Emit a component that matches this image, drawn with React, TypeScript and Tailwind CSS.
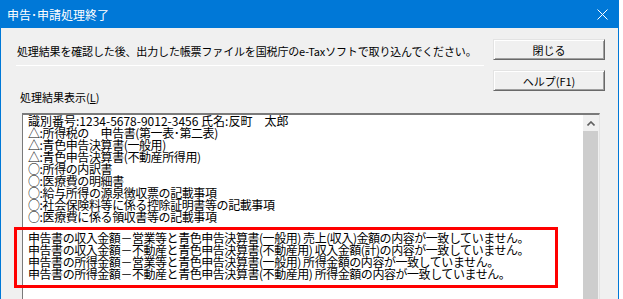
import React from "react";

const font = { fontFamily: '"Noto Sans CJK JP", "Noto Sans", sans-serif' };

const listLines = [
  "識別番号:1234-5678-9012-3456 氏名:反町　太郎",
  "△:所得税の　申告書(第一表･第二表)",
  "△:青色申告決算書(一般用)",
  "△:青色申告決算書(不動産所得用)",
  "○:所得の内訳書",
  "○:医療費の明細書",
  "○:給与所得の源泉徴収票の記載事項",
  "○:社会保険料等に係る控除証明書等の記載事項",
  "○:医療費に係る領収書等の記載事項",
];

const errorLines = [
  "申告書の収入金額－営業等と青色申告決算書(一般用) 売上(収入)金額の内容が一致していません。",
  "申告書の収入金額－不動産と青色申告決算書(不動産用) 収入金額(計)の内容が一致していません。",
  "申告書の所得金額－営業等と青色申告決算書(一般用) 所得金額の内容が一致していません。",
  "申告書の所得金額－不動産と青色申告決算書(不動産用) 所得金額の内容が一致していません。",
];

const WinButton = ({ label }: { label: string }) => (
  <button className="w-[112px] h-[21px] bg-[#f0f0f0] border border-t-[#e3e3e3] border-l-[#e3e3e3] border-r-[#696969] border-b-[#696969] shadow-[inset_1px_1px_0_#ffffff,inset_-1px_-1px_0_#a0a0a0] text-[11px] leading-[12px] text-black flex items-center justify-center">
    {label}
  </button>
);

const App = () => {
  return (
    <div className="relative w-[623px] h-[299px] bg-white overflow-hidden text-black" style={font}>
      <div className="w-[619px] h-full flex flex-col border-x border-t border-[#0078d7]">
        {/* title bar */}
        <div className="h-[27px] bg-[#0078d7] text-white text-[12px] flex items-center justify-between pl-[6px] pr-[10px] shrink-0">
          <span className="leading-[12px]">申告･申請処理終了</span>
          <svg width="11" height="11" viewBox="0 0 11 11">
            <path d="M0.5 0.5 L10.5 10.5 M10.5 0.5 L0.5 10.5" stroke="#ffffff" strokeWidth="1" />
          </svg>
        </div>

        {/* body */}
        <div className="flex-1 bg-[#f0f0f0] pt-[11px] flex flex-col min-h-0">
          <div className="flex h-[52px] shrink-0">
            <div className="w-[467px] ml-[16px] pt-[6px]">
              <p className="text-[11px] leading-[12px] tracking-[-0.15px] whitespace-nowrap">
                処理結果を確認した後、出力した帳票ファイルを国税庁のe-Taxソフトで取り込んでください。
              </p>
              <div className="h-[1px] bg-white mt-[8px] -ml-[1px]" />
            </div>
            <div className="ml-[9px] flex flex-col gap-[10px]">
              <WinButton label="閉じる" />
              <WinButton label="ヘルプ(F1)" />
            </div>
          </div>

          <p className="ml-[19px] text-[11px] leading-[12px] shrink-0">
            処理結果表示(<span className="underline">L</span>)
          </p>

          <div className="ml-[21px] mt-[10px] w-[578px] flex-1 flex bg-white border-t-2 border-l border-r border-t-[#7a7a7a] border-l-[#7a7a7a] border-r-[#e3e3e3]">
            <div className="flex-1 pl-[5px] text-[12px] leading-[12px] tracking-[-0.4px] whitespace-nowrap">
              {listLines.map((l, i) => (
                <div key={l} className={i === 0 ? "tracking-[0px]" : ""}>
                  {l}
                </div>
              ))}
              <div className="mt-[9px] tracking-[-0.45px]">
                {errorLines.map((l) => (
                  <div key={l}>{l}</div>
                ))}
              </div>
            </div>
            <div className="w-[16px] flex flex-col bg-[#f0f0f0]">
              <div className="h-[16px] flex items-center justify-center">
                <svg width="8" height="5" viewBox="0 0 8 5">
                  <path d="M0.5 4.5 L4 1 L7.5 4.5" stroke="#606060" strokeWidth="1.6" fill="none" />
                </svg>
              </div>
              <div className="flex-1 bg-[#cdcdcd] mr-[1px]" />
            </div>
          </div>
        </div>
      </div>

      {/* red annotation box */}
      <div className="absolute left-[14px] top-[227px] w-[544px] h-[61px] border-[3px] border-[#ff0000]" />
    </div>
  );
};

export default App;
